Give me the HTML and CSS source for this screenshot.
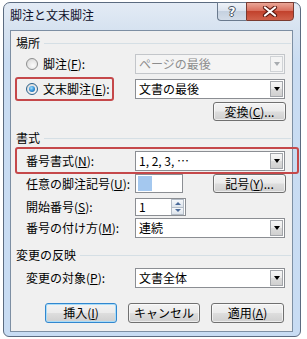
FILE: index.html
```html
<!DOCTYPE html>
<html lang="ja">
<head>
<meta charset="utf-8">
<title>脚注と文末脚注</title>
<link rel="stylesheet" href="styles.css">
</head>
<body>
<div class="window">
  <div class="titlebar">
    <span class="title">脚注と文末脚注</span>
    <div class="caption-btns">
      <div class="cbtn help"><span class="q">?</span></div>
      <div class="cbtn close">
        <svg width="16" height="11" viewBox="0 0 16 11"><path d="M3 1.5 L13 9.5 M13 1.5 L3 9.5" stroke="#5a1a12" stroke-width="4.2" stroke-linecap="round"/><path d="M3 1.5 L13 9.5 M13 1.5 L3 9.5" stroke="#fff" stroke-width="2.2" stroke-linecap="round"/></svg>
      </div>
    </div>
  </div>
  <div class="client">
    <div class="group-h g1"><span>場所</span><i class="rule"></i></div>

    <div class="row r-foot">
      <div class="lbl radio-lbl"><span class="radio"></span><span>脚注(<u>F</u>):</span></div>
      <div class="combo disabled"><span class="val">ページの最後</span><span class="arrow"><i class="tri"></i></span></div>
    </div>

    <div class="row r-end">
      <div class="lbl radio-lbl"><span class="radio on"><i class="dot"></i></span><span>文末脚注(<u>E</u>):</span></div>
      <div class="combo"><span class="val">文書の最後</span><span class="arrow"><i class="tri"></i></span></div>
      <div class="mark mark-a"></div>
    </div>

    <div class="row r-conv">
      <div class="btn w73">変換(<u>C</u>)...</div>
    </div>

    <div class="group-h g2"><span>書式</span><i class="rule"></i></div>

    <div class="row r-fmt">
      <div class="lbl">番号書式(<u>N</u>):</div>
      <div class="combo"><span class="val">1, 2, 3, …</span><span class="arrow"><i class="tri"></i></span></div>
      <div class="mark mark-b"></div>
    </div>

    <div class="row r-sym">
      <div class="lbl">任意の脚注記号(<u>U</u>):</div>
      <div class="textbox sym"><i class="sel"></i></div>
      <div class="btn w73 push-right">記号(<u>Y</u>)...</div>
    </div>

    <div class="row r-start">
      <div class="lbl">開始番号(<u>S</u>):</div>
      <div class="textbox spin"><span class="val">1</span>
        <span class="spinbtns"><i class="sb up"><b></b></i><i class="sb down"><b></b></i></span>
      </div>
    </div>

    <div class="row r-num">
      <div class="lbl">番号の付け方(<u>M</u>):</div>
      <div class="combo"><span class="val">連続</span><span class="arrow"><i class="tri"></i></span></div>
    </div>

    <div class="group-h g3"><span>変更の反映</span><i class="rule"></i></div>

    <div class="row r-apply">
      <div class="lbl">変更の対象(<u>P</u>):</div>
      <div class="combo"><span class="val">文書全体</span><span class="arrow"><i class="tri"></i></span></div>
    </div>

    <div class="row r-btns">
      <div class="btn w72 default">挿入(<u>I</u>)</div>
      <div class="btn w72">キャンセル</div>
      <div class="btn w73">適用(<u>A</u>)</div>
    </div>
  </div>
</div>
</body>
</html>
```

FILE: styles.css
```css
* { box-sizing: border-box; }
html, body { margin: 0; padding: 0; background: #fff; }
body {
  font-family: "Noto Sans CJK JP", "Noto Sans", sans-serif;
  font-size: 12px;
  color: #000;
}
u { text-decoration: underline; text-underline-offset: 1px; }

.window {
  margin: 2px 0 0 3px;
  width: 298px;
  height: 335px;
  border: 1px solid #5b6b80;
  border-radius: 7px 7px 6px 6px;
  background: linear-gradient(#e3ebf5 0px, #d6e2f0 27px, #c9dcf2 60px, #c8dcf3 100%);
  padding: 0 7px 4px 6px;
  display: flex;
  flex-direction: column;
}

.titlebar {
  height: 27px;
  display: flex;
  align-items: flex-start;
  justify-content: space-between;
}
.title {
  margin: 4px 0 0 0;
  line-height: 16px;
  font-size: 12px;
  color: #10102a;
}
.caption-btns {
  display: flex;
  margin-top: -1px;
  margin-right: -1px;
}
.cbtn {
  height: 19px;
  border: 1px solid #6a7a8e;
  display: flex;
  align-items: center;
  justify-content: center;
}
.help {
  width: 29px;
  border-right: none;
  border-radius: 0 0 0 4px;
  background: linear-gradient(#eef2f8 0%, #dce4ef 45%, #c5d1e0 50%, #d3dde9 100%);
}
.help .q {
  color: #fff;
  font-family: "DejaVu Sans", sans-serif;
  font-weight: bold;
  font-size: 12px;
  line-height: 12px;
  text-shadow: 0 0 1px #3c4656, 1px 0 0 #4c5666, -1px 0 0 #4c5666, 0 1px 0 #4c5666, 0 -1px 0 #4c5666;
}
.close {
  width: 48px;
  border-radius: 0 0 4px 0;
  background: linear-gradient(#eaa697 0%, #d9705e 45%, #c2422d 50%, #d0614b 100%);
  border-color: #7a3a30;
}

.client {
  height: 302px;
  border: 1px solid #7d8fa3;
  background: #f0f0f0;
  display: flex;
  flex-direction: column;
}

.group-h {
  height: 14px;
  display: flex;
  align-items: center;
  padding-left: 5px;
  line-height: 14px;
}
.group-h .rule {
  flex: 1;
  height: 1px;
  background: #d5dfe5;
  margin: 1px 1px 0 4px;
}
.g1 { margin-top: 5px; }
.g2 { margin-top: 10px; }
.g3 { margin-top: 10px; }

.row {
  display: flex;
  align-items: center;
  position: relative;
  padding-right: 6px;
}
.lbl {
  width: 124px;
  flex: none;
  padding-left: 15px;
  line-height: 16px;
  white-space: nowrap;
}
.radio-lbl {
  display: flex;
  align-items: center;
  gap: 5px;
}
.radio {
  width: 12px;
  height: 12px;
  border-radius: 50%;
  border: 1px solid #8e8f8f;
  background: radial-gradient(circle at 60% 65%, #fbfbfb 0%, #e6e6e6 55%, #cfcfcf 100%);
  display: flex;
  align-items: center;
  justify-content: center;
  flex: none;
}
.radio.on { border-color: #2c628b; }
.radio .dot {
  width: 6px;
  height: 6px;
  border-radius: 50%;
  background: radial-gradient(circle at 40% 35%, #a6e0fb 0%, #3d9be0 45%, #0e4c8a 100%);
}

.combo {
  width: 150px;
  height: 20px;
  border: 1px solid #8b8e93;
  background: #fff;
  display: flex;
  align-items: stretch;
  flex: none;
}
.combo .val {
  flex: 1;
  padding-left: 3px;
  line-height: 18px;
  white-space: nowrap;
  overflow: hidden;
}
.combo .arrow {
  width: 13px;
  margin: 1px;
  border: 1px solid #a3a6ab;
  background: linear-gradient(#f6f6f6 0%, #ebebeb 50%, #dcdcdc 50%, #d0d0d0 100%);
  display: flex;
  align-items: center;
  justify-content: center;
}
.tri {
  width: 0;
  height: 0;
  border-left: 3.5px solid transparent;
  border-right: 3.5px solid transparent;
  border-top: 4px solid #000;
}
.combo.disabled { border-color: #c3c6ca; background: #f4f4f4; }
.combo.disabled .val { color: #8d8d8d; }
.combo.disabled .arrow { border-color: #d0d3d6; background: #f4f4f4; }
.combo.disabled .tri { border-top-color: #a8acb0; }

.r-foot { margin-top: 4px; height: 20px; }
.r-end { margin-top: 5px; height: 20px; }
.r-conv { margin-top: 3px; height: 19px; justify-content: flex-end; }
.r-fmt { margin-top: 6px; height: 20px; }
.r-sym { margin-top: 3px; height: 19px; }
.r-start { margin-top: 5px; height: 18px; }
.r-num { margin-top: 2px; height: 20px; }
.r-apply { margin-top: 6px; height: 20px; }
.r-btns { margin-top: 15px; height: 20px; padding-left: 34px; gap: 11px; }

.btn {
  height: 100%;
  border: 1px solid #707070;
  border-radius: 3px;
  background: linear-gradient(#f3f3f3 0%, #ebebeb 48%, #dddddd 52%, #cfcfcf 100%);
  box-shadow: inset 0 0 0 1px rgba(255,255,255,0.6);
  display: flex;
  align-items: center;
  justify-content: center;
  line-height: 16px;
  white-space: nowrap;
  flex: none;
}
.w72 { width: 72px; }
.w73 { width: 73px; }
.btn.default {
  border-color: #3187cf;
  box-shadow: inset 0 0 0 1px #a9dcf8;
}
.push-right { margin-left: auto; }

.textbox {
  height: 100%;
  border: 1px solid #8b8e93;
  background: #fff;
  flex: none;
  display: flex;
  align-items: center;
}
.sym { width: 48px; padding-left: 2px; }
.sym .sel {
  width: 14px;
  height: 15px;
  background: #a4c8ef;
}
.spin { width: 51px; padding-left: 3px; position: relative; }
.spin .val { flex: 1; line-height: 16px; }
.spinbtns {
  width: 13px;
  height: 16px;
  display: flex;
  flex-direction: column;
  margin-right: 1px;
}
.sb {
  flex: 1;
  border: 1px solid #b4bcc6;
  background: linear-gradient(#f6f8fb, #dde4ec);
  display: flex;
  align-items: center;
  justify-content: center;
}
.sb.down { border-top: none; }
.sb b { width: 0; height: 0; border-left: 3px solid transparent; border-right: 3px solid transparent; }
.sb.up b { border-bottom: 3px solid #4a6a99; }
.sb.down b { border-top: 3px solid #4a6a99; }

.mark {
  position: absolute;
  border: 2px solid #c5484a;
  border-radius: 3px;
  pointer-events: none;
}
.mark-a { left: 4px; top: -2px; width: 99px; height: 24px; }
.mark-b { left: 4px; top: -4px; width: 284px; height: 27px; }
```
